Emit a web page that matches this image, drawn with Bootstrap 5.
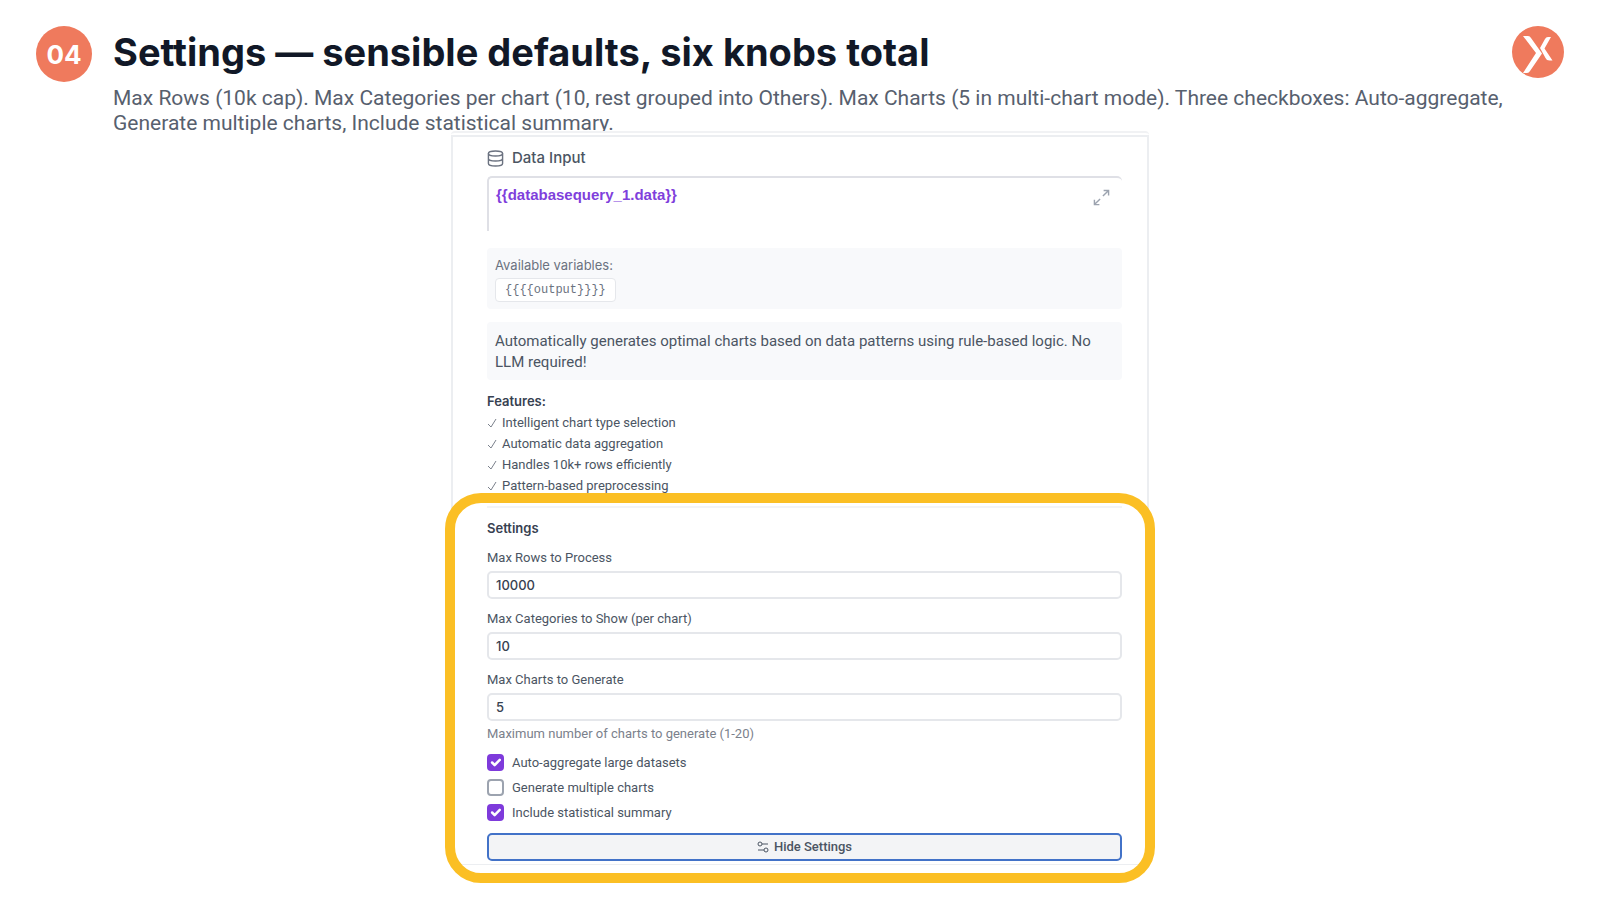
<!DOCTYPE html>
<html lang="en">
<head>
<meta charset="utf-8">
<meta name="viewport" content="width=device-width, initial-scale=1">
<title>Settings</title>
<link href="https://cdn.jsdelivr.net/npm/bootstrap@5.3.0/dist/css/bootstrap.min.css" rel="stylesheet">
<style>
body{font-family:Roboto,"Liberation Sans",sans-serif;color:#4b5563;background:#fff}
.slide-head{padding:26px 36px 0}
.step-no{width:56px;height:56px;margin-right:21px;background:#ef7a5d;font:700 26px Inter,sans-serif}
.slide-title{font-family:Inter,sans-serif;font-size:38px;line-height:52px;color:#111827}
.slide-sub{font-size:21px;line-height:25px;margin-top:8px;color:#57606e}
.brand-logo{width:52px;height:52px}
.panel-outer{max-width:698px;margin-top:-5px;margin-bottom:19px;border-top:2px solid #f1f2f4;border-radius:4px}
.panel-inner{margin-top:2px;border:2px solid #eceef1;border-bottom-width:1px}
.panel-part{padding:0 25px 0 34px}
.panel-part.first{padding-top:10px}
.field-head{font-family:Inter,sans-serif;font-size:15px;line-height:22px;gap:8px;margin-bottom:7px}
.query-box{height:55px;border:solid #dfe0e6;border-width:2px 0 0 2px;border-radius:5px 5px 0 0;padding:6px 48px 0 7px;font-family:"Liberation Sans",sans-serif;font-size:15px;line-height:22px;color:#7f3fdc;resize:none;overflow:hidden}
.expand-btn{top:13px;right:12px;line-height:0}
.soft-box{background:#f8f9fb;border-radius:4px;padding:7px 8px}
.vars{margin-top:17px;font-size:13px;line-height:21px;color:#6b7280}
.var-title{font-family:Inter,sans-serif}
.chip{font:12px/22px "Liberation Mono",monospace;border:1px solid #e5e7eb;border-radius:4px;padding:0 9px;margin-top:2px;color:#6b7280}
.blurb{margin-top:13px;padding:9px 8px 7px;font-size:15px;line-height:21px}
.feature-area{margin-top:11px;padding-bottom:10px;font-size:13px;line-height:21px}
.feature-area li{gap:5px}
.part-title{font-family:Inter,sans-serif;font-size:13px;line-height:21px;color:#374151}
.settings-body{border-top:2px solid #f3f4f6;padding:10px 0 3px;font-size:13px;line-height:20px}
.settings-area::after{content:"";position:absolute;inset:-13px -8px -19px;border:10px solid #fbbf24;border-radius:36px;pointer-events:none}
.num-field{height:28px;border:2px solid #e5e7eb;border-radius:5px;padding:0 7px;font-family:Inter,sans-serif;font-size:13px;line-height:20px;color:#374151;font-weight:500;margin-top:3px}
.stack{gap:10px;margin-top:9px}
.help{margin-top:3px;color:#7b818c}
.checks{margin-top:6px;margin-bottom:8px}
.checks .form-check{min-height:25px;gap:8px}
.checks .form-check-input{width:17px;height:17px;border:2px solid #9ca3af;border-radius:4px}
.checks .form-check-input:checked{background-color:#7e3adb;border-color:#7e3adb;background-size:17px 17px}
.hide-btn{height:28px;border:2px solid #4272c8;border-radius:5px;background:#f3f4f6;font-size:13px;line-height:20px;color:#4b5563;gap:5px}
</style>
</head>
<body class="min-vh-100">
<header class="slide-head d-flex align-items-start">
  <div class="step-no rounded-circle d-flex align-items-center justify-content-center flex-shrink-0 text-white">04</div>
  <div class="flex-grow-1">
    <h1 class="slide-title fw-bold mb-0">Settings — sensible defaults, six knobs total</h1>
    <p class="slide-sub mb-0">Max Rows (10k cap). Max Categories per chart (10, rest grouped into Others). Max Charts (5 in multi-chart mode). Three checkboxes: Auto-aggregate, Generate multiple charts, Include statistical summary.</p>
  </div>
  <svg class="brand-logo flex-shrink-0" viewBox="0 0 52 52" role="img" aria-label="Logo"><circle cx="26" cy="26" r="26" fill="#ef7a5d"/><path fill="#fff" d="M11 10h5q2 0 3 2l11 15.500-12 17.500q-1 2-3 2h-4l13-20z"/><path fill="#fff" d="M39 11h-3q-2 0-3 2l-5 9 5.500 10q1 2.500 4 2.500h3l-8-12z"/></svg>
</header>
<main class="panel-outer position-relative mx-auto bg-white">
  <div class="panel-inner">
    <section class="panel-part first">
      <label class="field-head d-flex align-items-center fw-medium" for="query">
        <svg width="17" height="17" viewBox="0 0 24 24" fill="none" stroke="#6b7280" stroke-width="2"><ellipse cx="12" cy="5" rx="10" ry="3.500"/><path d="M2 5v14c0 2 4.500 3.500 10 3.500s10-1.500 10-3.500V5M2 12c0 2 4.500 3.500 10 3.500s10-1.500 10-3.500"/></svg>
        Data Input
      </label>
      <div class="position-relative">
        <textarea id="query" class="query-box d-block w-100 fw-bold bg-white" spellcheck="false">{{databasequery_1.data}}</textarea>
        <button type="button" class="expand-btn btn p-0 border-0 position-absolute" aria-label="Expand">
          <svg width="17" height="17" viewBox="0 0 24 24" fill="none" stroke="#9ca3af" stroke-width="2"><path d="M15 2h7v7M22 2l-8 8M9 22H2v-7M2 22l8-8"/></svg>
        </button>
      </div>
      <div class="soft-box vars d-flex flex-column align-items-start">
        <span class="var-title">Available variables:</span>
        <code class="chip bg-white">{{{{output}}}}</code>
      </div>
      <p class="soft-box blurb mb-0">Automatically generates optimal charts based on data patterns using rule-based logic. No LLM required!</p>
      <div class="feature-area">
        <h2 class="part-title fw-semibold mb-0">Features:</h2>
        <ul class="list-unstyled mb-0">
          <li class="d-flex align-items-center"><svg width="10" height="10" viewBox="0 0 10 10" fill="none" stroke="#7b818c"><path d="M1 6l3 3L9 1"/></svg>Intelligent chart type selection</li>
          <li class="d-flex align-items-center"><svg width="10" height="10" viewBox="0 0 10 10" fill="none" stroke="#7b818c"><path d="M1 6l3 3L9 1"/></svg>Automatic data aggregation</li>
          <li class="d-flex align-items-center"><svg width="10" height="10" viewBox="0 0 10 10" fill="none" stroke="#7b818c"><path d="M1 6l3 3L9 1"/></svg>Handles 10k+ rows efficiently</li>
          <li class="d-flex align-items-center"><svg width="10" height="10" viewBox="0 0 10 10" fill="none" stroke="#7b818c"><path d="M1 6l3 3L9 1"/></svg>Pattern-based preprocessing</li>
        </ul>
      </div>
    </section>
    <section class="panel-part settings-area position-relative">
      <form class="settings-body">
        <h2 class="part-title fw-semibold mb-0">Settings</h2>
        <div class="stack d-flex flex-column">
          <div><label class="d-block" for="rows">Max Rows to Process</label><input id="rows" class="num-field d-block w-100" type="text" inputmode="numeric" value="10000"></div>
          <div><label class="d-block" for="cats">Max Categories to Show (per chart)</label><input id="cats" class="num-field d-block w-100" type="text" inputmode="numeric" value="10"></div>
          <div><label class="d-block" for="charts">Max Charts to Generate</label><input id="charts" class="num-field d-block w-100" type="text" inputmode="numeric" value="5"><div class="help">Maximum number of charts to generate (1-20)</div></div>
        </div>
        <div class="checks">
          <div class="form-check d-flex align-items-center p-0 m-0"><input class="form-check-input m-0" type="checkbox" id="agg" checked><label for="agg">Auto-aggregate large datasets</label></div>
          <div class="form-check d-flex align-items-center p-0 m-0"><input class="form-check-input m-0" type="checkbox" id="multi"><label for="multi">Generate multiple charts</label></div>
          <div class="form-check d-flex align-items-center p-0 m-0"><input class="form-check-input m-0" type="checkbox" id="stats" checked><label for="stats">Include statistical summary</label></div>
        </div>
        <button type="button" class="hide-btn btn w-100 p-0 d-flex align-items-center justify-content-center fw-medium">
          <svg width="12" height="12" viewBox="0 0 12 12" fill="none" stroke="#4b5563"><circle cx="3" cy="3" r="2"/><circle cx="9" cy="9" r="2"/><path d="M5 3h6M1 9h6"/></svg>
          Hide Settings
        </button>
      </form>
    </section>
  </div>
</main>
<script src="https://cdn.jsdelivr.net/npm/bootstrap@5.3.0/dist/js/bootstrap.bundle.min.js"></script>
</body>
</html>
